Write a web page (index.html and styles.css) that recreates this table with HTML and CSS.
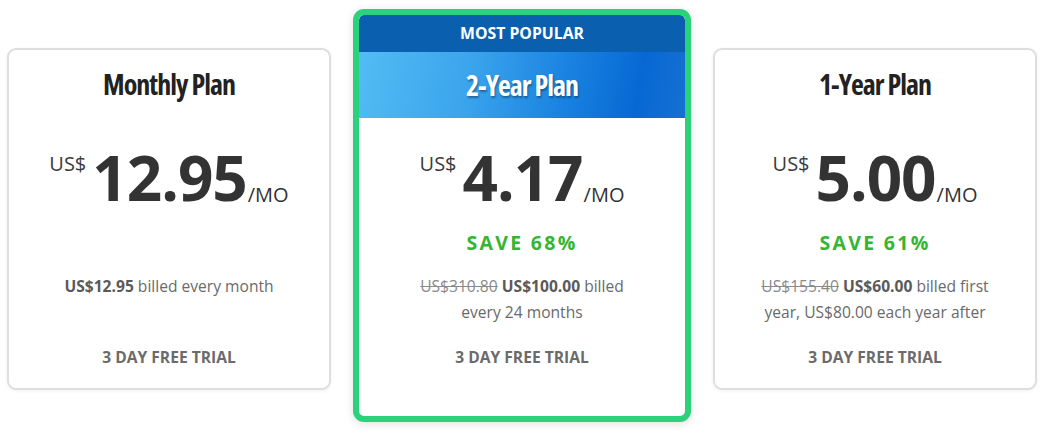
FILE: index.html
```html
<!DOCTYPE html>
<html lang="en">
<head>
<meta charset="utf-8">
<title>Plans</title>
<link rel="stylesheet" href="styles.css">
</head>
<body>
<div class="plans">
  <div class="card side">
    <div class="head"><h2 class="title">Monthly Plan</h2></div>
    <div class="body">
      <div class="price"><span class="cur">US$</span><span class="amount">12.95</span><span class="per">/MO</span></div>
      <div class="save"></div>
      <div class="billing"><b>US$12.95</b> billed every month</div>
      <div class="trial">3 DAY FREE TRIAL</div>
    </div>
  </div>
  <div class="card popular">
    <div class="ribbon">MOST POPULAR</div>
    <div class="head band"><h2 class="title">2-Year Plan</h2></div>
    <div class="body">
      <div class="price"><span class="cur">US$</span><span class="amount">4.17</span><span class="per">/MO</span></div>
      <div class="save">SAVE 68%</div>
      <div class="billing"><s>US$310.80</s> <b>US$100.00</b> billed<br>every 24 months</div>
      <div class="trial">3 DAY FREE TRIAL</div>
    </div>
  </div>
  <div class="card side">
    <div class="head"><h2 class="title">1-Year Plan</h2></div>
    <div class="body">
      <div class="price"><span class="cur">US$</span><span class="amount">5.00</span><span class="per">/MO</span></div>
      <div class="save">SAVE 61%</div>
      <div class="billing"><s>US$155.40</s> <b>US$60.00</b> billed first<br>year, US$80.00 each year after</div>
      <div class="trial">3 DAY FREE TRIAL</div>
    </div>
  </div>
</div>
</body>
</html>
```

FILE: styles.css
```css
* { box-sizing: border-box; }
html, body { margin: 0; padding: 0; background: #fff; }
body {
  font-family: "Open Sans", "Liberation Sans", sans-serif;
  width: 1046px;
  height: 436px;
  overflow: hidden;
}
.plans {
  display: grid;
  grid-template-columns: 324px 338px 324px;
  column-gap: 22px;
  align-items: start;
  padding: 9px 8px 0 7px;
}
.card {
  background: #fff;
  display: flex;
  flex-direction: column;
  text-align: center;
}
.side {
  margin-top: 39px;
  border: 2px solid #dedede;
  border-radius: 9px;
  box-shadow: 0 1px 4px rgba(0,0,0,0.06);
}
.popular {
  border: 6px solid #2bd17b;
  border-radius: 11px;
  box-shadow: 0 2px 10px rgba(0,0,0,0.12);
  overflow: hidden;
}
.ribbon {
  height: 37px;
  line-height: 37px;
  background: #0a5fae;
  color: #fff;
  font-weight: 700;
  font-size: 15.8px;
  border-radius: 5px 5px 0 0;
}
.head {
  height: 68px;
  display: flex;
  align-items: center;
  justify-content: center;
}
.band {
  height: 66px;
  background: linear-gradient(100deg, #52bcf4 0%, #3aa3ec 35%, #1c86e2 60%, #0768d4 85%, #1670d2 100%);
}
.title {
  margin: 0;
  font-size: 28px;
  font-weight: 700;
  font-stretch: 75%;
  letter-spacing: -1px;
  color: #222;
  line-height: 36px;
}
.band .title {
  color: #fff;
  text-shadow: 1px 2px 2px rgba(0,0,0,0.35);
}
.body {
  padding: 28px 10px 21px;
  display: flex;
  flex-direction: column;
  align-items: center;
}
.popular .body { padding-bottom: 49px; }
.price {
  display: flex;
  align-items: flex-start;
  justify-content: center;
  height: 62px;
  color: #333;
}
.cur {
  font-size: 20px;
  line-height: 20px;
  margin-top: 8px;
  margin-right: 6px;
  color: #3a3a3a;
}
.amount {
  font-size: 62px;
  font-weight: 700;
  line-height: 62px;
  letter-spacing: -1px;
}
.per {
  font-size: 20px;
  line-height: 20px;
  align-self: flex-end;
  margin-bottom: 3px;
  margin-left: 1px;
  color: #333;
}
.save {
  margin-top: 23px;
  height: 24px;
  line-height: 24px;
  font-size: 19.5px;
  font-weight: 700;
  letter-spacing: 2.3px;
  color: #35b531;
}
.billing {
  margin-top: 18px;
  min-height: 52px;
  font-size: 15.6px;
  line-height: 26px;
  color: #6a6a6a;
}
.billing b { color: #5a5a5a; }
.billing s { color: #8a8a8a; }
.trial {
  margin-top: 22px;
  height: 20px;
  line-height: 20px;
  font-size: 15.6px;
  font-weight: 700;
  color: #6b6b6b;
}
```
